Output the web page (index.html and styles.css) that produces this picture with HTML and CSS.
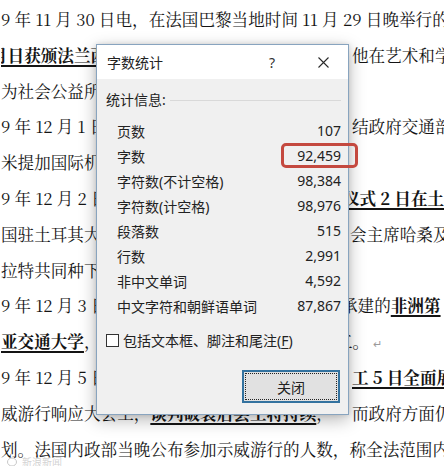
FILE: index.html
```html
<!DOCTYPE html>
<html lang="zh-CN">
<head>
<meta charset="utf-8">
<title>字数统计</title>
<link rel="stylesheet" href="styles.css">
</head>
<body>
<div class="page">
  <div class="doc">
    <div class="ln">9 年 11 月 30 日电，在法国巴黎当地时间 11 月 29 日晚举行的</div>
    <div class="ln"><span class="l cut"><b class="u">月日获颁法兰西学院</b>艺术院院士称号，以表彰</span><span class="r gap3">他在艺术和学</span></div>
    <div class="ln"><span class="l">为社会公益所作出的杰出贡献。</span><span class="r"></span></div>
    <div class="ln"><span class="l">9 年 12 月 1 日电，据肯尼亚</span><span class="r gap3">结政府交通部</span></div>
    <div class="ln"><span class="l">米提加国际机场新航站楼</span><span class="r"></span></div>
    <div class="ln"><span class="l">9 年 12 月 2 日电，中国援建</span><span class="r back6"><b class="u">仪式 2 日在土</b></span></div>
    <div class="ln"><span class="l">国驻土耳其大使与土方议</span><span class="r gap1">会主席哈桑及</span></div>
    <div class="ln"><span class="l">拉特共同种下友谊树。</span><span class="r"></span></div>
    <div class="ln"><span class="l">9 年 12 月 3 日电，由中国企业</span><span class="r back8">承建的<b class="u">非洲第</b></span></div>
    <div class="ln"><span class="l"><b class="u">亚交通大学</b>，日前正式开工。</span><span class="r back13">工。<span class="ret">↵</span></span></div>
    <div class="ln"><span class="l">9 年 12 月 5 日电，法国各行业</span><span class="r gap3"><b class="u">工 5 日全面展</b></span></div>
    <div class="ln"><span class="l">威游行响应大会工，<b class="u">谈判破裂后罢工将持续</b>，</span><span class="r gap3">而政府方面仍</span></div>
    <div class="ln">划。法国内政部当晚公布参加示威游行的人数，称全法范围内</div>
  </div>

  <div class="dialog">
    <div class="titlebar">
      <span class="title">字数统计</span>
      <span class="help">?</span>
      <span class="close"><svg width="11" height="11" viewBox="0 0 11 11"><path d="M0.5 0.5L10.5 10.5M10.5 0.5L0.5 10.5" stroke="#2a2a2a" stroke-width="1.1" fill="none"/></svg></span>
    </div>
    <div class="dbody">
      <div class="grouphead"><span>统计信息:</span><span class="rule"></span></div>
      <div class="stats">
        <div class="row"><span>页数</span><span class="num">107</span></div>
        <div class="row"><span>字数</span><span class="num">92,459</span></div>
        <div class="row"><span>字符数(不计空格)</span><span class="num">98,384</span></div>
        <div class="row"><span>字符数(计空格)</span><span class="num">98,976</span></div>
        <div class="row"><span>段落数</span><span class="num">515</span></div>
        <div class="row"><span>行数</span><span class="num">2,991</span></div>
        <div class="row"><span>非中文单词</span><span class="num">4,592</span></div>
        <div class="row"><span>中文字符和朝鲜语单词</span><span class="num">87,867</span></div>
      </div>
      <div class="check"><span class="box"></span><span>包括文本框、脚注和尾注(<u>F</u>)</span></div>
      <div class="actions"><button class="btn" type="button"><span class="focus">关闭</span></button></div>
    </div>
  </div>

  <div class="highlight"></div>
  <div class="mark"><svg width="12" height="10" viewBox="0 0 12 10"><ellipse cx="5" cy="5" rx="4.5" ry="4" fill="none" stroke="#c8c8c8" stroke-width="1"/></svg><span>新浪新闻</span></div>
</div>
</body>
</html>
```

FILE: styles.css
```css
* {
  box-sizing: border-box;
  margin: 0;
  padding: 0;
}

html,
body {
  width: 444px;
  height: 466px;
  overflow: hidden;
  background: #fff;
}

.page {
  position: relative;
  width: 444px;
  height: 466px;
  overflow: hidden;
}

/* background document */
.doc {
  padding-top: 2px;
  font-family: "Noto Serif CJK SC", "Noto Sans Mono CJK SC", "Noto Sans CJK SC", serif;
  font-size: 16.6px;
  color: #141414;
}

.ln {
  display: flex;
  height: 35.8px;
  line-height: 35.8px;
  white-space: nowrap;
  padding-left: 1px;
}

.l {
  flex: none;
  width: 348px;
  overflow: hidden;
}

.l.cut {
  text-indent: -10px;
}

.r {
  flex: none;
}

.gap1 { margin-left: 1px; }
.gap3 { margin-left: 3px; }
.back6 { margin-left: -6px; }
.back8 { margin-left: -8px; }
.back13 { margin-left: -13px; }

.u {
  font-weight: 700;
  text-decoration: underline;
  text-underline-offset: 3px;
  text-decoration-thickness: 1.5px;
}

.ret {
  color: #9a9a9a;
  font-size: 11px;
  margin-left: 4px;
}

/* dialog */
.dialog {
  position: absolute;
  left: 96px;
  top: 44px;
  width: 253px;
  height: 371px;
  display: flex;
  flex-direction: column;
  border: 1px solid #88a4bf;
  background: #f0f0f0;
  box-shadow: 0 5px 16px rgba(0, 0, 0, 0.28), 0 0 5px rgba(0, 0, 0, 0.12);
  font-family: "Noto Sans", "Noto Sans CJK SC", sans-serif;
  font-size: 14px;
  color: #222;
}

.titlebar {
  height: 34px;
  flex: none;
  display: flex;
  align-items: center;
  padding-left: 10px;
  background: #fff;
}

.title {
  flex: 1;
}

.help {
  width: 46px;
  text-align: center;
  color: #333;
  margin-right: 5px;
}

.close {
  width: 46px;
  margin-right: 2px;
  display: flex;
  justify-content: center;
  align-items: center;
}

.dbody {
  flex: 1;
  display: flex;
  flex-direction: column;
  padding: 11px 7px 0 9px;
}

.grouphead {
  display: flex;
  align-items: center;
  gap: 4px;
  line-height: 20px;
}

.rule {
  flex: 1;
  height: 1px;
  background: #d9d9d9;
}

.stats {
  margin-top: 8px;
}

.row {
  height: 25px;
  display: flex;
  align-items: center;
  justify-content: space-between;
  padding-left: 11px;
}

.check {
  margin-top: 12px;
  height: 20px;
  display: flex;
  align-items: center;
  gap: 4px;
}

.box {
  width: 13px;
  height: 13px;
  border: 1px solid #333;
  background: #fff;
}

.check u {
  text-underline-offset: 2px;
}

.actions {
  margin-top: 20px;
  display: flex;
  justify-content: flex-end;
  padding-right: 1px;
}

.btn {
  width: 98px;
  height: 33px;
  padding: 1px;
  border: 2px solid #33729f;
  background: #e1e1e1;
  font: inherit;
  color: #222;
  display: flex;
}

.focus {
  flex: 1;
  display: flex;
  align-items: center;
  justify-content: center;
  border: 1px dotted #222;
}

/* annotation overlay */
.highlight {
  position: absolute;
  left: 281px;
  top: 143px;
  width: 77px;
  height: 25px;
  border: 3px solid #c4493f;
  border-radius: 5px;
}

.mark {
  position: absolute;
  left: 7px;
  top: 454px;
  display: flex;
  align-items: center;
  gap: 3px;
  font-family: "Noto Sans CJK SC", sans-serif;
  font-size: 10px;
  color: rgba(180, 180, 180, 0.6);
}
```
